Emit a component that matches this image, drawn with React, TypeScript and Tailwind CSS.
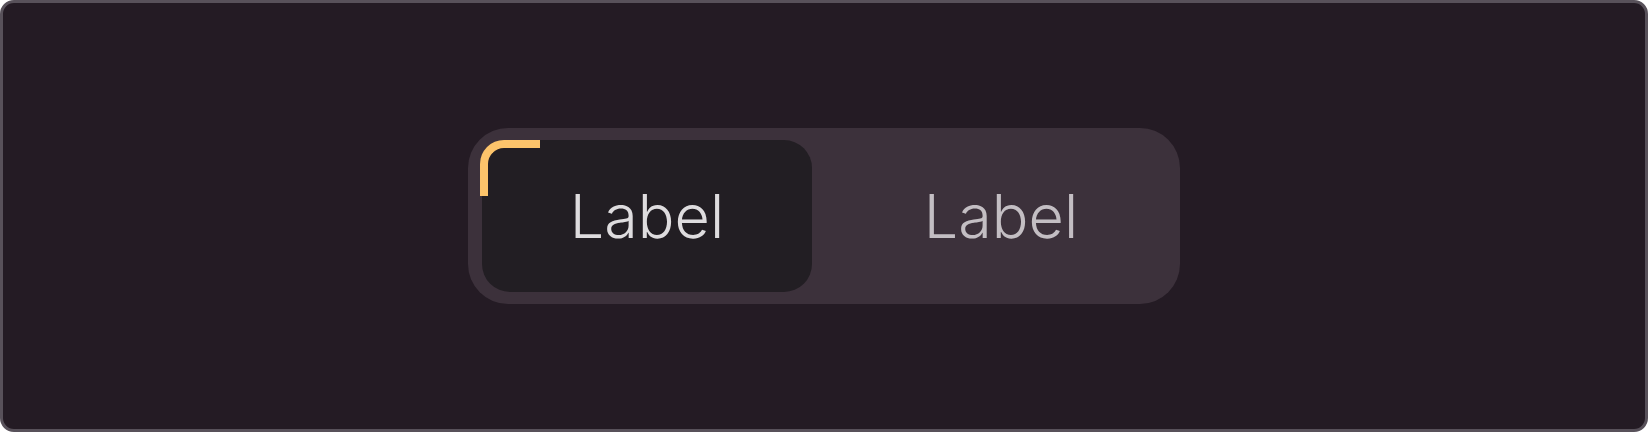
import React, { useState } from 'react';

const options = ['Label', 'Label'];

export default function App() {
  const [active, setActive] = useState(0);

  return (
    <div
      className="w-[1648px] h-[432px] flex items-center justify-center bg-[#241b24] border-[3px] border-[#58515a] rounded-[14px]"
      style={{ fontFamily: 'Inter, "Noto Sans", sans-serif' }}
    >
      <div className="w-[712px] h-[176px] flex gap-[24px] px-[14px] py-[12px] rounded-[40px] bg-[#3c313b]">
        {options.map((label, i) => (
          <button
            key={i}
            onClick={() => setActive(i)}
            className={
              i === active
                ? 'relative flex-1 flex items-center justify-center rounded-[28px] bg-[#221e23] text-[#dedcde] text-[61px] font-[350]'
                : 'relative flex-1 flex items-center justify-center rounded-[28px] text-[#c3bec3] text-[61px] font-[350]'
            }
          >
            {i === active && (
              // focus indicator corner
              <span className="absolute left-[-2px] top-0 w-[60px] h-[56px] border-t-[8px] border-l-[8px] border-[#fdc46b] rounded-tl-[24px]" />
            )}
            <span className="leading-none">{label}</span>
          </button>
        ))}
      </div>
    </div>
  );
}
